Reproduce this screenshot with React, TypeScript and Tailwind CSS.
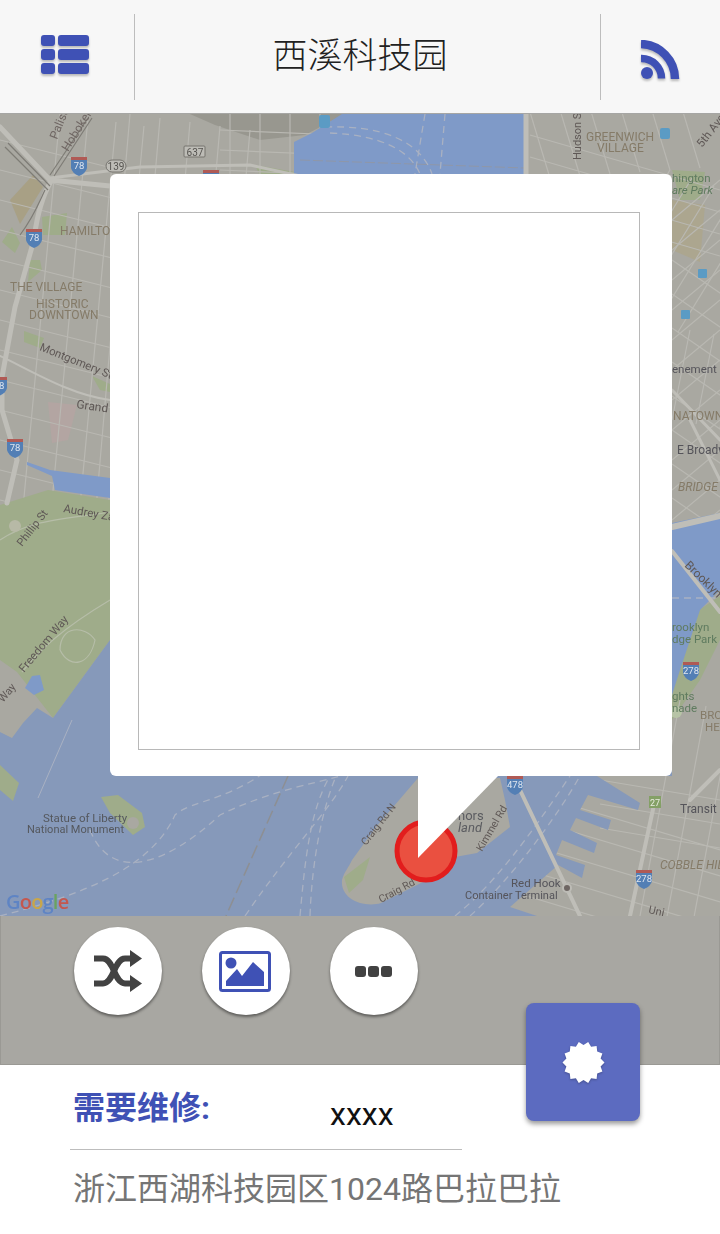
import React from 'react';

const cjk = { fontFamily: 'Roboto, "Noto Sans CJK SC", sans-serif' };

// families of parallel streets: x1 y1 x2 y2 (first street), step x, step y, count
const streetSets: number[][] = [
  [60, 114, 20, 540, 28, 4, 4],
  [130, 114, 95, 520, 30, 4, 5],
  [0, 140, 120, 170, 0, 30, 14],
  [230, 114, 230, 180, 30, 0, 8],
  [220, 130, 340, 135, 0, 20, 3],
  [500, 114, 520, 180, 30, -2, 7],
  [530, 135, 720, 190, 0, 22, 4],
  [670, 170, 590, 300, 22, 8, 5],
  [672, 220, 720, 180, 0, 30, 12],
  [672, 260, 730, 300, 0, 34, 9],
  [690, 330, 672, 420, 24, 4, 3],
  [680, 700, 640, 916, 26, 6, 4],
  [520, 790, 720, 850, 0, 26, 6],
  [600, 780, 720, 800, 0, 24, 3],
  [455, 800, 490, 850, 14, -6, 3],
  [350, 880, 430, 800, 12, 10, 5],
];

const streets = streetSets.flatMap(([x1, y1, x2, y2, dx, dy, n]) =>
  Array.from({ length: n }, (_, i) => [x1 + dx * i, y1 + dy * i, x2 + dx * i, y2 + dy * i]),
);

const flower = Array.from({ length: 28 }, (_, i) => {
  const a = (i * Math.PI) / 14;
  const r = i % 2 === 0 ? 21 : 17.5;
  return `${(21.5 + r * Math.cos(a)).toFixed(1)},${(21.5 + r * Math.sin(a)).toFixed(1)}`;
}).join(' ');

type Label = [string, number, number, number, string, number?, boolean?];

const labels: Label[] = [
  ['Palisade', 57, 140, 12, '#6f6663', -68],
  ['Hoboken Ave', 68, 152, 12, '#6f6663', -58],
  ['HAMILTON', 60, 235, 12, '#857b68', 0],
  ['THE VILLAGE', 10, 291, 12, '#857b68', 0],
  ['HISTORIC', 36, 308, 12, '#857b68', 0],
  ['DOWNTOWN', 29, 319, 12, '#857b68', 0],
  ['Montgomery St', 39, 350, 11.3, '#5f5856', 22],
  ['Grand St', 76, 408, 12, '#5f5856', 8],
  ['Audrey Zapp', 63, 512, 11.5, '#5f5856', 10],
  ['Phillip St', 22, 547, 11, '#5f5856', -52],
  ['Freedom Way', 24, 673, 11.5, '#5f5856', -50],
  ['Way', 3, 703, 11, '#5f5856', -50],
  ['Statue of Liberty', 43, 822, 11.5, '#55585e', 0],
  ['National Monument', 27, 833, 11, '#55585e', 0],
  ['Craig Rd N', 366, 846, 10.5, '#5f5856', -52],
  ['Craig Rd', 381, 903, 10.5, '#5f5856', -28],
  ['Kimmel Rd', 482, 852, 10.5, '#5f5856', -60],
  ['nors', 458, 820, 13, '#5b5c60', 0],
  ['land', 458, 832, 13, '#5b5c60', 0, true],
  ['Red Hook', 511, 887, 11.5, '#55545a', 0],
  ['Container Terminal', 465, 899, 11, '#55545a', 0],
  ['COBBLE HILL', 660, 869, 12, '#857b68', 0, true],
  ['Transit M', 680, 813, 12, '#55545a', 0],
  ['Uni', 648, 913, 11, '#5f5856', 12],
  ['GREENWICH', 586, 141, 12, '#857b68', 0],
  ['VILLAGE', 597, 152, 12, '#857b68', 0],
  ['Hudson St', 581, 160, 11, '#5f5856', -90],
  ['5th Ave', 702, 148, 11.5, '#5f5856', -52],
  ['hington', 672, 182, 11.5, '#5f7b5f', 0],
  ['are Park', 672, 194, 11.5, '#5f7b5f', 0, true],
  ['enement M', 672, 373, 11.5, '#55545a', 0],
  ['NATOWN', 673, 420, 12, '#857b68', 0],
  ['E Broadw', 677, 454, 12, '#55545a', 0],
  ['BRIDGE', 678, 491, 12, '#857b68', 0, true],
  ['Brooklyn', 684, 566, 12, '#5f5856', 44],
  ['rooklyn', 672, 631, 11.5, '#5f7b5f', 0],
  ['dge Park', 672, 643, 11.5, '#5f7b5f', 0],
  ['ghts', 672, 700, 11.5, '#5f7b5f', 0],
  ['nade', 672, 712, 11.5, '#5f7b5f', 0],
  ['BRO', 700, 719, 11.5, '#857b68', 0],
  ['HE', 705, 731, 11.5, '#857b68', 0],
];

// interstate badges: x, y, number
const shields: [number, number, string][] = [
  [79, 165, '78'],
  [211, 178, '78'],
  [34, 237, '78'],
  [15, 447, '78'],
  [-1, 385, '78'],
  [691, 670, '278'],
  [515, 784, '478'],
  [644, 878, '278'],
];

function MapCanvas() {
  return (
    <svg viewBox="0 114 720 802" className="block w-[720px] h-[802px] blur-[0.7px]">
      <rect x="0" y="114" width="720" height="802" fill="#a9a8a1" />
      {/* dark rail yard at the top */}
      <polygon points="190,114 345,114 305,135 260,140 215,125" fill="#98978f" />
      {/* tan and park areas */}
      <polygon points="10,200 33,175 43,187 20,224" fill="#a8a085" />
      <polygon points="672,200 705,205 700,262 672,250" fill="#aca68f" />
      <polygon points="42,217 67,213 65,235 43,235" fill="#9fac8a" />
      <polygon points="2,242 12,227 20,243 15,253" fill="#9fac8a" />
      <polygon points="30,260 40,260 42,270 28,282" fill="#9fac8a" />
      <polygon points="24,331 44,338 40,348 24,342" fill="#9fac8a" />
      <polygon points="92,376 110,384 110,392 100,390" fill="#9fac8a" />
      <polygon points="255,165 295,172 292,180 262,180" fill="#9fac8a" />
      <polygon points="672,170 705,172 700,200 680,200" fill="#9fac8a" />
      <polygon points="48,402 77,405 68,440 52,443" fill="#b3a5a2" />
      <polygon points="684,620 720,596 720,640 700,680 672,720 672,650" fill="#9fac8a" />
      {streets.map(([x1, y1, x2, y2], i) => (
        <line key={i} x1={x1} y1={y1} x2={x2} y2={y2} stroke="#b9b8b2" strokeWidth="1.2" />
      ))}
      <polygon points="0,505 48,490 110,500 110,640 53,718 17,672 0,660" fill="#9fac8a" />
      <g fill="none" stroke="#b6bda8" strokeWidth="1.2">
        <path d="M22 672 C40 650 60 630 110 600" />
        <path d="M60 650 C60 625 85 625 95 640 C90 665 70 670 60 650" />
        <path d="M0 540 C30 520 60 520 110 512" />
      </g>
      {/* bay, harbour and rivers */}
      <polygon
        points="0,732 12,738 23,723 37,708 53,718 110,640 672,640 672,776 597,776 640,803 638,810 588,795 580,810 611,820 608,830 576,818 570,830 597,843 594,853 562,840 556,855 585,865 582,878 558,865 510,907 537,916 0,916"
        fill="#8699ba"
      />
      <polygon points="342,114 526,114 526,174 294,174 294,142 312,133" fill="#7f9ac8" />
      <polygon points="672,523 720,513 720,590 700,610 690,640 680,670 672,695" fill="#7f9ac8" />
      <polygon points="27,462 50,470 110,478 110,498 55,490 52,476 27,465" fill="#7f9ac8" />
      <polygon points="32,676 40,675 44,690 34,695 25,688" fill="#7f9ac8" />
      <polygon points="0,765 19,783 13,801 0,790" fill="#9fac8a" />
      {/* Governors Island */}
      <path d="M342 880 C344 872 349 867 352 860 L376 827 L418 778 H500 L505 800 L510 827 L477 853 L455 857 L427 880 L381 903 C365 908 340 900 342 880 Z" fill="#a9a8a1" />
      <polygon points="344,877 370,857 363,880 349,893" fill="#9fac8a" />
      {/* Liberty Island */}
      <polygon points="101,797 118,795 142,813 145,827 133,835 110,813" fill="#9fac8a" />
      <circle cx="133" cy="823" r="6" fill="#a9a8a1" />
      {/* ferry routes */}
      <g fill="none" stroke="#a9b1c2" strokeWidth="1.3" strokeDasharray="7 5">
        <path d="M0 916 C80 895 150 870 175 815 C190 800 240 800 285 755" />
        <path d="M90 830 C110 880 160 870 220 815 C270 790 330 780 340 776" />
        <path d="M245 916 C290 850 330 810 348 776" />
        <path d="M300 916 C305 860 310 810 330 776" />
        <path d="M310 916 C312 860 322 810 336 776" />
        <path d="M455 916 C500 880 540 820 570 776" />
        <path d="M470 916 C510 880 555 820 580 776" />
        <path d="M330 133 C380 135 410 150 420 174" />
        <path d="M325 127 C380 125 420 140 432 174" />
        <path d="M425 114 L415 174" />
        <path d="M445 114 L440 174" />
        <path d="M672 598 L720 598" />
      </g>
      <line x1="288" y1="776" x2="226" y2="916" stroke="#8d8f93" strokeWidth="1.5" strokeDasharray="14 5" />
      <line x1="38" y1="798" x2="72" y2="720" stroke="#a9b1c2" strokeWidth="1" />
      <line x1="300" y1="160" x2="525" y2="168" stroke="#8f97a8" strokeWidth="1" strokeDasharray="10 3" />
      {/* highways and piers */}
      <g fill="none" stroke="#bfbeb8" strokeLinecap="round">
        <path d="M0 127 L50 180 L110 186" strokeWidth="5" />
        <path d="M50 183 C35 210 35 240 33 243 L15 307 L2 377 L2 410 L17 460 L7 503" strokeWidth="5" />
        <path d="M50 178 L140 167 L250 165 L300 176" strokeWidth="3" />
        <path d="M526 114 L526 174" strokeWidth="5" />
        <path d="M672 527 L720 516" strokeWidth="6" />
        <path d="M672 551 L720 612" strokeWidth="4" />
        <path d="M520 790 L580 916" strokeWidth="4" />
        <path d="M655 800 L630 916" strokeWidth="4" />
        <path d="M690 800 L720 770" strokeWidth="4" />
        <path d="M0 356 C30 370 70 395 110 400" strokeWidth="2" />
        <path d="M720 440 L672 390 M720 480 L690 420" strokeWidth="3" />
      </g>
      <g fill="none" stroke="#7e7c76" strokeWidth="1.2">
        <path d="M5 147 L48 190 M8 143 L50 186" />
        <path d="M50 175 L88 118 M54 176 L92 118" />
        <path d="M20 235 C35 215 40 200 45 190" />
      </g>
      {/* transit and road badges */}
      <rect x="319" y="115" width="11" height="13" rx="2" fill="#5b9bc4" />
      <rect x="660" y="128" width="10" height="11" rx="2" fill="#5b9bc4" />
      <rect x="698" y="269" width="9" height="9" rx="1" fill="#5b9bc4" />
      <rect x="681" y="310" width="9" height="9" rx="1" fill="#5b9bc4" />
      <rect x="184" y="146" width="21" height="11" rx="1" fill="#bdbcb6" stroke="#76746f" />
      <text x="195" y="155.5" fontSize="10" fill="#55534f" textAnchor="middle" fontFamily="Roboto, sans-serif">637</text>
      <rect x="106" y="160" width="20" height="12" rx="6" fill="#bdbcb6" stroke="#76746f" />
      <text x="116" y="170" fontSize="10" fill="#55534f" textAnchor="middle" fontFamily="Roboto, sans-serif">139</text>
      <rect x="649" y="796" width="12" height="12" fill="#84a066" />
      <text x="655" y="806" fontSize="9" fill="#e8ebdf" textAnchor="middle" fontFamily="Roboto, sans-serif">27</text>
      {shields.map(([x, y, n]) => (
        <g key={`${x}-${y}`}>
          <path d={`M${x - 8} ${y - 6} H${x + 8} V${y + 3} Q${x + 7} ${y + 8} ${x} ${y + 11} Q${x - 7} ${y + 8} ${x - 8} ${y + 3} Z`} fill="#537fb5" />
          <rect x={x - 8} y={y - 8} width="16" height="3" fill="#b05a55" />
          <text x={x} y={y + 4} fontSize="9.5" fill="#dfe5ee" textAnchor="middle" fontFamily="Roboto, sans-serif">{n}</text>
        </g>
      ))}
      <circle cx="15" cy="526" r="6" fill="#b7b9a6" />
      <circle cx="567" cy="888" r="4" fill="#6e6663" stroke="#bdbcb6" strokeWidth="2" />
      <circle cx="676" cy="712" r="6" fill="#b7c4a6" />
      {labels.map(([text, x, y, size, fill, rotate, italic]) => (
        <text
          key={text + x}
          x={x}
          y={y}
          fontSize={size}
          fill={fill}
          fontStyle={italic ? 'italic' : 'normal'}
          transform={rotate ? `rotate(${rotate} ${x} ${y})` : undefined}
          fontFamily="Roboto, sans-serif"
        >
          {text}
        </text>
      ))}
      {/* google mark */}
      <text x="6" y="909" fontSize="20" fontWeight="600" fontFamily="'Open Sans', Roboto, sans-serif" letterSpacing="-0.8">
        <tspan fill="#5e84c4">G</tspan>
        <tspan fill="#c4584f">o</tspan>
        <tspan fill="#c9a64a">o</tspan>
        <tspan fill="#5e84c4">g</tspan>
        <tspan fill="#6aa35f">l</tspan>
        <tspan fill="#c4584f">e</tspan>
      </text>
      {/* picked point */}
      <circle cx="426" cy="851" r="29" fill="#ea5040" stroke="#e21d1d" strokeWidth="5" />
    </svg>
  );
}

function ListIcon() {
  return (
    <div className="grid grid-cols-[14px_31px] gap-x-[3px] gap-y-[3px] drop-shadow-[0_2px_1px_rgba(0,0,0,0.25)]">
      {[0, 1, 2].map((row) => (
        <React.Fragment key={row}>
          <div className="h-[11px] rounded-[3px] bg-[#3f51b5]" />
          <div className="h-[11px] rounded-[3px] bg-[#3f51b5]" />
        </React.Fragment>
      ))}
    </div>
  );
}

function RssIcon() {
  return (
    <svg viewBox="0 0 40 40" className="w-10 h-10 drop-shadow-[0_2px_1px_rgba(0,0,0,0.25)]" fill="none" stroke="#3f51b5">
      <path d="M0 4 A35 35 0 0 1 34 39" strokeWidth="8.5" />
      <path d="M0 18.5 A20 20 0 0 1 20.5 38.5" strokeWidth="7.5" />
      <circle cx="6" cy="33" r="6" fill="#3f51b5" stroke="none" />
    </svg>
  );
}

function ShuffleIcon() {
  return (
    <svg viewBox="0 0 48 43" className="w-12 h-[43px]" fill="#424242">
      <g fill="none" stroke="#424242" strokeWidth="6">
        <path d="M0 8.5 H9 C20 8.5 20 33.5 31 33.5 H38" />
        <path d="M0 33.5 H9 C20 33.5 20 8.5 31 8.5 H38" />
      </g>
      <polygon points="36,0 48,8.5 36,17" />
      <polygon points="36,25 48,33.5 36,42" />
    </svg>
  );
}

function ImageIcon() {
  return (
    <svg viewBox="0 0 52 42" className="w-[52px] h-[42px] -ml-[2px] mt-[2px]">
      <rect x="1.5" y="1.5" width="49" height="38" rx="2" fill="#fff" stroke="#3f51b5" strokeWidth="3" />
      <circle cx="12" cy="12" r="5.5" fill="#3f51b5" />
      <polygon points="7,35 7,30 18,18 23,25 34,11 45,21 45,35" fill="#3f51b5" />
    </svg>
  );
}

function RoundButton({ children }: { children: React.ReactNode }) {
  return (
    <div className="w-[88px] h-[88px] rounded-full bg-white flex items-center justify-center shadow-[0_2px_3px_rgba(0,0,0,0.45)]">
      {children}
    </div>
  );
}

export default function App() {
  return (
    <div className="relative w-[720px] h-[1234px] bg-white overflow-hidden" style={cjk}>
      <header className="h-[114px] bg-[#f7f7f7] border-b border-[#a6a6a4] flex items-center">
        <div className="w-[134px] flex justify-center pr-[4px] pb-[5px]">
          <ListIcon />
        </div>
        <div className="w-px h-[86px] bg-[#bdbdbd]" />
        <h1 className="w-[465px] text-center text-[35px] leading-[44px] text-[#212121] font-light pt-[1px] pr-[15px]">西溪科技园</h1>
        <div className="w-px h-[86px] bg-[#bdbdbd]" />
        <div className="flex-1 flex justify-center pl-[1px] pt-[6px]">
          <RssIcon />
        </div>
      </header>

      <section className="relative h-[802px] overflow-hidden">
        <MapCanvas />
        <div className="absolute left-[110px] top-[60px] w-[562px] h-[602px] bg-white rounded-[6px] pl-[28px] pr-[32px] pt-[38px] pb-[26px]">
          <div className="w-full h-full border border-[#b8b8b8]" />
        </div>
        <div className="absolute left-[418px] top-[661px] w-[81px] h-[83px] bg-white [clip-path:polygon(0_0,100%_0,0_100%)]" />
      </section>

      <section className="h-[149px] bg-[#a8a7a2] border-x border-b border-[#9a9994] flex items-start gap-[40px] pl-[73px] pt-[11px]">
        <RoundButton><ShuffleIcon /></RoundButton>
        <RoundButton><ImageIcon /></RoundButton>
        <RoundButton>
          <div className="flex gap-[2px] -ml-[1px]">
            <div className="w-[11px] h-[11px] rounded-[3px] bg-[#424242]" />
            <div className="w-[11px] h-[11px] rounded-[3px] bg-[#424242]" />
            <div className="w-[11px] h-[11px] rounded-[3px] bg-[#424242]" />
          </div>
        </RoundButton>
      </section>

      <section className="pt-[21px]">
        <div className="flex items-start pl-[73px] h-[63px]">
          <div className="w-[257px] text-[32px] leading-[44px] font-bold text-[#3f51b5]">需要维修:</div>
          <div className="text-[32px] leading-[44px] pt-[6px] text-[#111]">xxxx</div>
        </div>
        <div className="ml-[70px] w-[392px] h-px bg-[#bdbdbd]" />
        <div className="pl-[73px] pt-[17px] text-[32px] leading-[44px] text-[#757575]">浙江西湖科技园区1024路巴拉巴拉</div>
      </section>

      <div className="absolute left-[526px] top-[1003px] w-[114px] h-[118px] rounded-[8px] bg-[#5c6bc0] flex items-center justify-center shadow-[0_3px_5px_rgba(0,0,0,0.4)]">
        <svg viewBox="0 0 43 43" className="w-[43px] h-[43px] drop-shadow-[0_1px_1px_rgba(0,0,0,0.25)]">
          <polygon points={flower} fill="#fff" />
        </svg>
      </div>
    </div>
  );
}
